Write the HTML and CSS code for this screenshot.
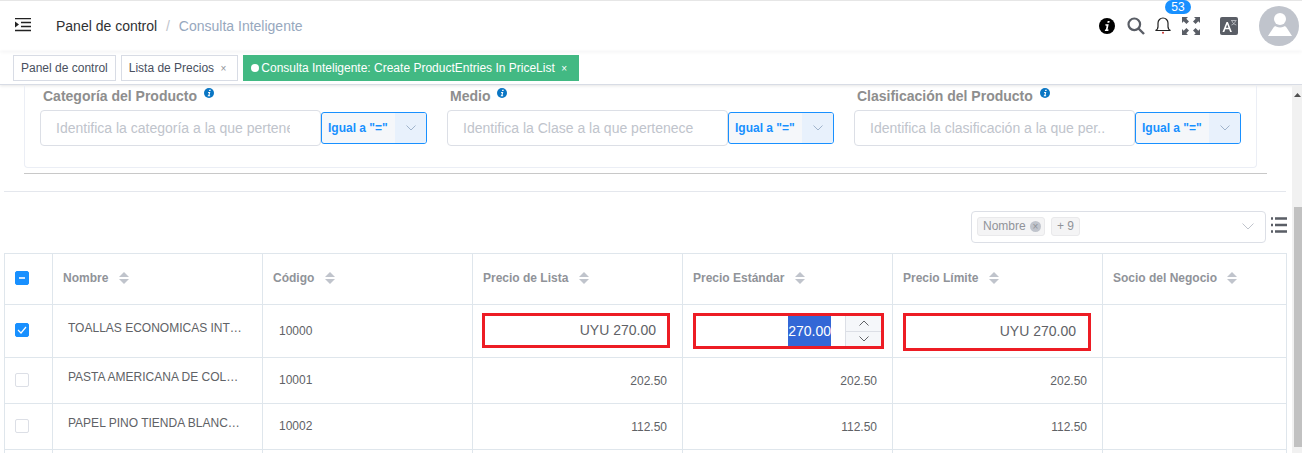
FILE: index.html
```html
<!DOCTYPE html>
<html lang="es">
<head>
<meta charset="UTF-8">
<title>Consulta Inteligente</title>
<link rel="stylesheet" href="styles.css">
</head>
<body>
<!-- Top navbar -->
<header class="navbar">
  <svg class="menu-icon" width="16" height="14" viewBox="0 0 16 14"><path d="M0 0.5h16M6 4.5h10M6 8.5h10M0 12.5h16" stroke="#222" stroke-width="1.6" fill="none"/><path d="M0 3.5l4 3-4 3z" fill="#222"/></svg>
  <nav class="breadcrumb">
    <span class="crumb-link">Panel de control</span>
    <span class="crumb-sep">/</span>
    <span class="crumb-current">Consulta Inteligente</span>
  </nav>
  <div class="nav-icons">
    <svg class="icon-info" width="16" height="16" viewBox="0 0 16 16"><circle cx="8" cy="8" r="8" fill="#000"/><path d="M8.700 2.900h2l-.4 1.900h-2zM6.300 6.300h3.400l-1.100 5.200h1l-.3 1.400H5.800l.3-1.400h.8l.7-3.800h-1z" fill="#fff"/></svg>
    <svg class="icon-search" width="18" height="18" viewBox="0 0 18 18"><circle cx="7.300" cy="7.300" r="5.800" fill="none" stroke="#5a5e66" stroke-width="2.200"/><path d="M11.500 11.500l5.500 5.500" stroke="#5a5e66" stroke-width="2.400"/></svg>
    <span class="bell-wrap">
      <svg width="16" height="17" viewBox="0 0 16 17"><path d="M.5 13.500c1.800-.8 2.500-2 2.500-4V6a5 5 0 0 1 10 0v3.500c0 2 .7 3.200 2.500 4z" fill="none" stroke="#222" stroke-width="1.200"/><circle cx="8" cy="15.800" r="1" fill="#c33"/></svg>
      <span class="badge">53</span>
    </span>
    <svg class="icon-full" width="18" height="18" viewBox="0 0 18 18"><path d="M0 0h6L4.300 1.700 7 4.400 4.400 7 1.700 4.300 0 6zM18 0v6l-1.700-1.700L13.600 7 11 4.400l2.700-2.700L12 0zM0 18v-6l1.700 1.700L4.400 11 7 13.600l-2.700 2.700L6 18zM18 18h-6l1.700-1.700L11 13.600 13.600 11l2.700 2.700L18 12z" fill="#5a5e66"/></svg>
    <svg class="icon-lang" width="18" height="18" viewBox="0 0 18 18"><rect width="18" height="18" rx="2" fill="#5a5e66"/><path d="M2.500 15L6.500 5h1.400l4 10h-1.800l-1-2.700H5.300L4.300 15zM5.900 10.800h2.600L7.200 7.300z" fill="#fff"/><path d="M11 3.500h5.500M12 4c.6 2 2.200 3.300 4.300 4M15.500 4c-.6 2-2 3.300-4 4" fill="none" stroke="#d8dade" stroke-width=".7"/></svg>
    <span class="avatar">
      <svg width="40" height="40" viewBox="0 0 40 40"><circle cx="21" cy="13" r="6" fill="#fff"/><path d="M9 30l5.500-8.500c1-1.500 2-1.500 3-.8 2 1 5 1 7 0 1-.7 2-.7 3 .8L33 30z" fill="#fff"/></svg>
    </span>
  </div>
</header>

<!-- Open tabs -->
<div class="tabs">
  <span class="tab">Panel de control</span>
  <span class="tab">Lista de Precios <i class="tab-close">×</i></span>
  <span class="tab tab-active"><i class="tab-dot"></i>Consulta Inteligente: Create ProductEntries In PriceList <i class="tab-close">×</i></span>
</div>

<div class="page">
  <main class="content">
    <section class="filter-panel">
      <div class="field">
        <label class="field-label">Categoría del Producto <svg class="hint" width="10" height="10" viewBox="0 0 10 10"><use href="#hint-icon"/></svg></label>
        <div class="field-row">
          <div class="text-input"><span class="placeholder placeholder-cut">Identifica la categoría a la que pertene</span></div>
          <div class="operator"><span class="operator-text">Igual a "="</span><span class="operator-arrow"><svg width="10" height="6" viewBox="0 0 10 6"><path d="M.5.500L5 5 9.500.500" fill="none" stroke="#a0b4cc"/></svg></span></div>
        </div>
      </div>
      <div class="field">
        <label class="field-label">Medio <svg class="hint" width="10" height="10" viewBox="0 0 10 10"><use href="#hint-icon"/></svg></label>
        <div class="field-row">
          <div class="text-input"><span class="placeholder">Identifica la Clase a la que pertenece</span></div>
          <div class="operator"><span class="operator-text">Igual a "="</span><span class="operator-arrow"><svg width="10" height="6" viewBox="0 0 10 6"><path d="M.5.500L5 5 9.500.500" fill="none" stroke="#a0b4cc"/></svg></span></div>
        </div>
      </div>
      <div class="field">
        <label class="field-label">Clasificación del Producto <svg class="hint" width="10" height="10" viewBox="0 0 10 10"><use href="#hint-icon"/></svg></label>
        <div class="field-row">
          <div class="text-input"><span class="placeholder">Identifica la clasificación a la que per..</span></div>
          <div class="operator"><span class="operator-text">Igual a "="</span><span class="operator-arrow"><svg width="10" height="6" viewBox="0 0 10 6"><path d="M.5.500L5 5 9.500.500" fill="none" stroke="#a0b4cc"/></svg></span></div>
        </div>
      </div>
    </section>
    <hr class="rule-dark">
    <hr class="rule-light">

    <div class="toolbar">
      <div class="column-select">
        <span class="tag">Nombre <i class="tag-close">×</i></span>
        <span class="tag">+ 9</span>
        <svg class="column-arrow" width="12" height="7" viewBox="0 0 12 7"><path d="M.5.500L6 6 11.500.500" fill="none" stroke="#c0c4cc"/></svg>
      </div>
      <svg class="list-icon" width="16" height="16" viewBox="0 0 16 16"><path d="M0 1.500h2M4 1.500h12M0 8h2M4 8h12M0 14.500h2M4 14.500h12" stroke="#5a5e66" stroke-width="2.600"/></svg>
    </div>

    <table class="grid">
      <colgroup>
        <col class="col-check"><col class="col-wide"><col class="col-wide"><col class="col-wide"><col class="col-wide"><col class="col-wide"><col class="col-last">
      </colgroup>
      <thead>
        <tr>
          <th class="cell-check"><span class="checkbox checkbox-on"><i class="minus"></i></span></th>
          <th>Nombre <i class="sort"></i></th>
          <th>Código <i class="sort"></i></th>
          <th>Precio de Lista <i class="sort"></i></th>
          <th>Precio Estándar <i class="sort"></i></th>
          <th>Precio Límite <i class="sort"></i></th>
          <th>Socio del Negocio <i class="sort"></i></th>
        </tr>
      </thead>
      <tbody>
        <tr class="row-edit">
          <td class="cell-check"><span class="checkbox checkbox-on"><svg width="10" height="8" viewBox="0 0 10 8"><path d="M1 4l3 3 5-6" fill="none" stroke="#fff" stroke-width="1.200"/></svg></span></td>
          <td><div class="name">TOALLAS ECONOMICAS INT…</div></td>
          <td><div class="code">10000</div></td>
          <td class="cell-boxed cell-list"><div class="marked marked-list">UYU 270.00</div></td>
          <td class="cell-boxed cell-std">
            <div class="marked marked-std">
              <span class="number-value"><span class="selected">270.00</span></span>
              <span class="stepper">
                <span class="step"><svg width="10" height="6" viewBox="0 0 10 6"><path d="M.5 5.500L5 1l4.500 4.500" fill="none" stroke="#606266"/></svg></span>
                <span class="step step-down"><svg width="10" height="6" viewBox="0 0 10 6"><path d="M.5.500L5 5 9.500.500" fill="none" stroke="#606266"/></svg></span>
              </span>
            </div>
          </td>
          <td class="cell-boxed cell-limit"><div class="marked marked-limit">UYU 270.00</div></td>
          <td></td>
        </tr>
        <tr>
          <td class="cell-check"><span class="checkbox"></span></td>
          <td><div class="name">PASTA AMERICANA DE COL…</div></td>
          <td><div class="code">10001</div></td>
          <td class="num">202.50</td>
          <td class="num">202.50</td>
          <td class="num">202.50</td>
          <td></td>
        </tr>
        <tr>
          <td class="cell-check"><span class="checkbox"></span></td>
          <td><div class="name">PAPEL PINO TIENDA BLANC…</div></td>
          <td><div class="code">10002</div></td>
          <td class="num">112.50</td>
          <td class="num">112.50</td>
          <td class="num">112.50</td>
          <td></td>
        </tr>
        <tr>
          <td class="cell-check"></td><td></td><td></td><td></td><td></td><td></td><td></td>
        </tr>
      </tbody>
    </table>
  </main>
  <div class="scrollbar">
    <svg class="scroll-arrow" width="7" height="4" viewBox="0 0 7 4"><path d="M3.500 0L7 4H0z" fill="#505050"/></svg>
    <div class="scroll-thumb"></div>
  </div>
</div>

<svg width="0" height="0" class="defs">
  <symbol id="hint-icon" viewBox="0 0 10 10"><circle cx="5" cy="5" r="5" fill="#0a76c4"/><path d="M5.300 1.800h1.500l-.3 1.300H5zM4 4h2.300l-.8 3.300h.7l-.2.900H3.700l.2-.9h.5l.5-2.400h-.7z" fill="#fff"/></symbol>
</svg>
</body>
</html>
```

FILE: styles.css
```css
/* General styles */
html, body {
  margin: 0;
  padding: 0;
  height: 100%;
}

body {
  display: flex;
  flex-direction: column;
  height: 453px;
  overflow: hidden;
  font-family: "Liberation Sans", Arial, sans-serif;
  background-color: #fff;
  color: #606266;
}

i {
  font-style: normal;
}

.defs {
  display: none;
}

/* Navbar */
.navbar {
  display: flex;
  align-items: center;
  flex: none;
  height: 50px;
  border-top: 1px solid #e6e6e6;
  box-shadow: 0 1px 4px rgba(0, 21, 41, 0.05);
  position: relative;
}

.menu-icon {
  margin-left: 15px;
  margin-top: -2px;
}

.breadcrumb {
  margin-left: 25px;
  font-size: 14px;
}

.crumb-link {
  color: #303133;
}

.crumb-sep {
  color: #c0c4cc;
  margin: 0 5px;
}

.crumb-current {
  color: #97a8be;
}

.nav-icons {
  display: flex;
  align-items: center;
  margin-left: auto;
  margin-right: 3px;
  margin-top: -1px;
}

.icon-search {
  margin-left: 12px;
}

.bell-wrap {
  position: relative;
  display: flex;
  margin-left: 10px;
}

.badge {
  position: absolute;
  left: 10px;
  top: -17px;
  width: 26px;
  height: 14px;
  line-height: 14px;
  border-radius: 7px;
  background-color: #1890ff;
  color: #fff;
  font-size: 12px;
  text-align: center;
}

.icon-full {
  margin-left: 11px;
}

.icon-lang {
  margin-left: 20px;
}

.avatar {
  display: block;
  width: 40px;
  height: 40px;
  margin-left: 21px;
  border-radius: 50%;
  background-color: #c0c4cc;
}

/* Tabs */
.tabs {
  display: flex;
  flex: none;
  gap: 5px;
  height: 34px;
  padding: 4px 0 0 13px;
  box-sizing: border-box;
  border-bottom: 1px solid #d8dce5;
  box-shadow: 0 1px 3px rgba(0, 0, 0, 0.1);
}

.tab {
  display: block;
  height: 26px;
  line-height: 24px;
  padding: 0 7px;
  box-sizing: border-box;
  border: 1px solid #d8dce5;
  background-color: #fff;
  color: #495060;
  font-size: 12px;
  white-space: nowrap;
}

.tab-close {
  display: inline-block;
  margin-left: 3px;
  margin-right: 4px;
  color: #909399;
  font-size: 10px;
}

.tab-active {
  width: 336px;
  background-color: #42b983;
  border-color: #42b983;
  color: #fff;
}

.tab-active .tab-close {
  color: #fff;
}

.tab-dot {
  display: inline-block;
  width: 8px;
  height: 8px;
  margin-right: 2px;
  border-radius: 50%;
  background-color: #fff;
}

/* Page body */
.page {
  display: flex;
  flex: 1;
  min-height: 0;
}

.content {
  width: 1292px;
  flex: none;
  overflow: hidden;
}

.scrollbar {
  position: relative;
  width: 10px;
  background-color: #f1f1f1;
  padding-left: 2px;
  box-sizing: border-box;
}

.scroll-arrow {
  display: block;
  margin-top: 8px;
  margin-left: 0;
}

.scroll-thumb {
  margin-top: 110px;
  height: 240px;
  background-color: #c1c1c1;
}

/* Filter panel */
.filter-panel {
  display: flex;
  gap: 20px;
  width: 1233px;
  box-sizing: border-box;
  margin-left: 24px;
  padding: 2px 0 21px 15px;
  border: 1px solid #ebeef5;
  border-top: none;
  border-radius: 0 0 4px 4px;
}

.field {
  width: 387px;
}

.field-label {
  display: block;
  height: 18px;
  line-height: 18px;
  margin-bottom: 5px;
  padding-left: 3px;
  color: #8e8e8e;
  font-size: 14px;
  font-weight: bold;
}

.hint {
  margin-left: 3px;
  vertical-align: 3px;
}

.field-row {
  display: flex;
  align-items: center;
}

.text-input {
  width: 281px;
  height: 36px;
  line-height: 34px;
  padding: 0 15px;
  box-sizing: border-box;
  border: 1px solid #dcdfe6;
  border-radius: 4px;
  overflow: hidden;
  white-space: nowrap;
}

.placeholder {
  display: block;
  overflow: hidden;
  color: #c0c4cc;
  font-size: 14px;
}

.placeholder-cut {
  width: 234px;
}

.operator {
  display: flex;
  width: 106px;
  height: 32px;
  box-sizing: border-box;
  border: 1px solid #1890ff;
  border-radius: 3px;
  background-color: #f5f7fa;
  overflow: hidden;
}

.operator-text {
  flex: 1;
  padding-left: 6px;
  line-height: 30px;
  color: #1890ff;
  font-size: 12px;
  font-weight: bold;
}

.operator-arrow {
  display: flex;
  align-items: center;
  justify-content: center;
  width: 31px;
  background-color: #e8f1fc;
}

.rule-dark {
  width: 1243px;
  height: 1px;
  margin: 5px 0 0 24px;
  border: none;
  background-color: #c8c8c8;
}

.rule-light {
  width: 1282px;
  height: 1px;
  margin: 17px 0 0 4px;
  border: none;
  background-color: #e4e7ed;
}

/* Column selector */
.toolbar {
  display: flex;
  margin: 19px 0 10px 971px;
}

.column-select {
  display: flex;
  align-items: flex-start;
  gap: 6px;
  width: 295px;
  height: 32px;
  padding: 5px 5px 0;
  box-sizing: border-box;
  border: 1px solid #dcdfe6;
  border-radius: 4px;
}

.tag {
  display: block;
  height: 19px;
  line-height: 17px;
  padding: 0 5px;
  box-sizing: border-box;
  border: 1px solid #e9e9eb;
  border-radius: 3px;
  background-color: #f4f4f5;
  color: #909399;
  font-size: 12px;
}

.tag-close {
  display: inline-block;
  width: 11px;
  height: 11px;
  line-height: 11px;
  margin-left: 1px;
  margin-right: -2px;
  border-radius: 50%;
  background-color: #c0c4cc;
  color: #909399;
  font-size: 10px;
  text-align: center;
}

.column-arrow {
  margin-left: auto;
  margin-top: 6px;
  margin-right: 6px;
}

.list-icon {
  margin-left: 5px;
  margin-top: 6px;
}

/* Data table */
.grid {
  width: 1282px;
  margin-left: 4px;
  border-collapse: collapse;
  table-layout: fixed;
}

.col-check {
  width: 48px;
}

.col-wide {
  width: 210px;
}

.col-last {
  width: 184px;
}

.grid th,
.grid td {
  border: 1px solid #dfe6ec;
  padding: 0;
  box-sizing: border-box;
  font-size: 12px;
}

.grid th {
  height: 51px;
  padding-left: 10px;
  padding-bottom: 2px;
  color: #909399;
  font-weight: bold;
  text-align: left;
  white-space: nowrap;
}

.grid td {
  height: 46px;
}

.grid .row-edit td {
  height: 53px;
}

.grid th.cell-check,
.grid td.cell-check {
  padding-left: 10px;
  padding-bottom: 2px;
}

.sort {
  display: inline-block;
  position: relative;
  width: 10px;
  height: 12px;
  margin-left: 7px;
  vertical-align: -2px;
}

.sort::before,
.sort::after {
  content: "";
  position: absolute;
  left: 0;
  border: 5px solid transparent;
}

.sort::before {
  top: -5px;
  border-bottom-color: #c0c4cc;
}

.sort::after {
  top: 7px;
  border-top-color: #c0c4cc;
}

.checkbox {
  display: flex;
  align-items: center;
  justify-content: center;
  width: 14px;
  height: 14px;
  box-sizing: border-box;
  border: 1px solid #dcdfe6;
  border-radius: 2px;
  background-color: #fff;
}

.checkbox-on {
  background-color: #1890ff;
  border-color: #1890ff;
}

.minus {
  width: 6px;
  height: 2px;
  background-color: #cfe6ff;
}

.name {
  margin-left: 15px;
  padding-bottom: 7px;
  white-space: nowrap;
}

.code {
  margin-left: 16px;
  padding-bottom: 1px;
}

.num {
  text-align: right;
  padding-right: 15px !important;
}

/* Cells with the red marks */
.grid .cell-boxed {
  vertical-align: top;
  padding-top: 8px;
}

.cell-list {
  padding-left: 9px !important;
}

.cell-std,
.cell-limit {
  padding-left: 10px !important;
}

.marked {
  box-sizing: border-box;
  border: 3px solid #ed1c24;
  font-size: 14px;
  text-align: right;
}

.marked-list {
  width: 188px;
  height: 35px;
  line-height: 29px;
  padding-right: 11px;
}

.marked-limit {
  width: 188px;
  height: 38px;
  line-height: 30px;
  padding-right: 12px;
}

.marked-std {
  display: flex;
  width: 191px;
  height: 36px;
}

.number-value {
  flex: 1;
  padding: 0 14px 0 0;
  line-height: 30px;
}

.selected {
  display: inline-block;
  background-color: #3367d6;
  color: #fff;
}

.stepper {
  display: flex;
  flex-direction: column;
  width: 35px;
  flex: none;
  border-left: 1px solid #dcdfe6;
  background-color: #f5f7fa;
}

.step {
  display: flex;
  flex: 1;
  align-items: center;
  justify-content: center;
}

.step-down {
  border-top: 1px solid #dcdfe6;
}
```
